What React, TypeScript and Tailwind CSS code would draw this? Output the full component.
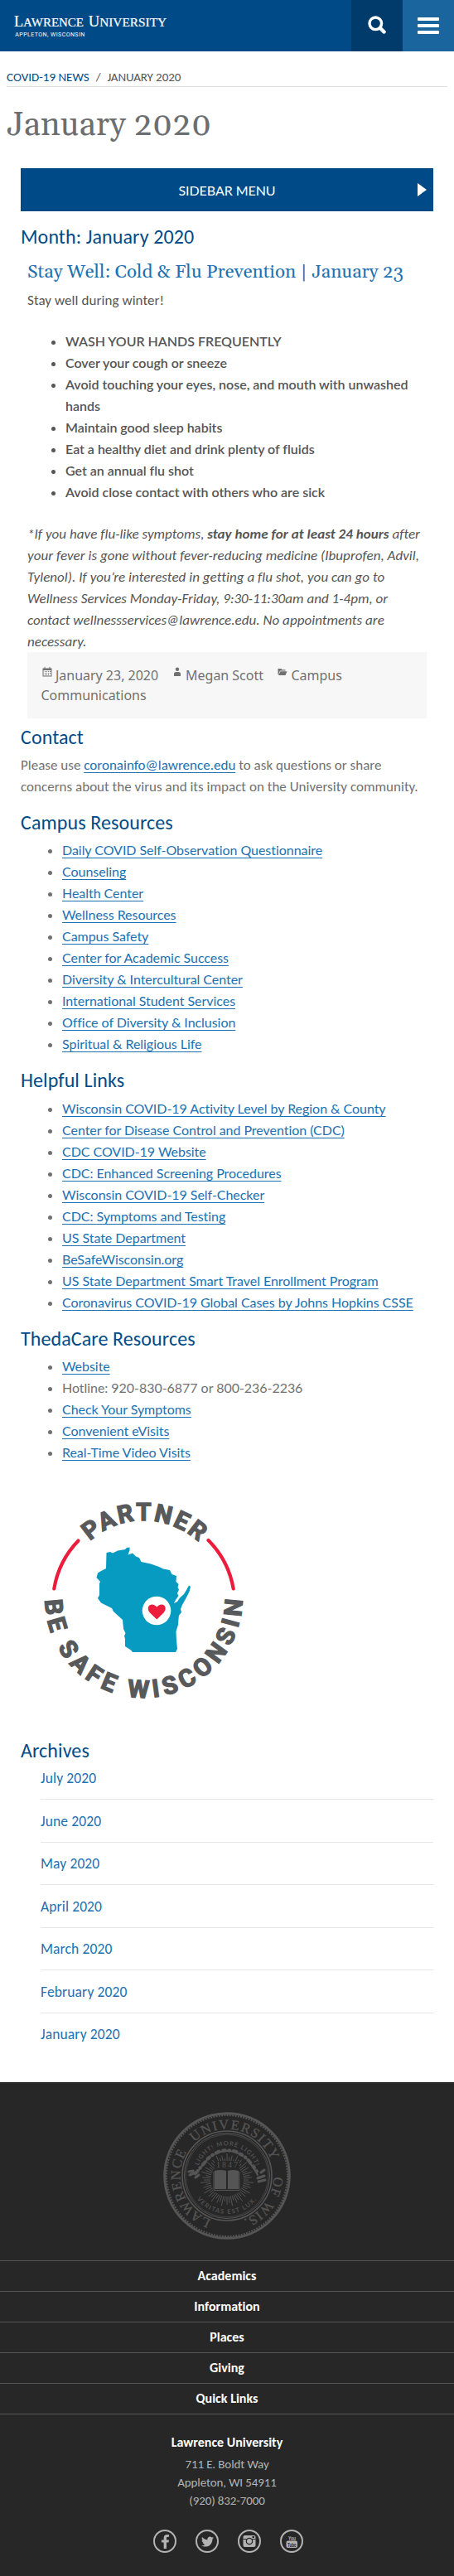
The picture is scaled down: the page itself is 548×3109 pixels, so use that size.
import React from "react";
import { FaFacebookF, FaTwitter } from "react-icons/fa";

const campus = [
  "Daily COVID Self-Observation Questionnaire",
  "Counseling",
  "Health Center",
  "Wellness Resources",
  "Campus Safety",
  "Center for Academic Success",
  "Diversity & Intercultural Center",
  "International Student Services",
  "Office of Diversity & Inclusion",
  "Spiritual & Religious Life",
];
const helpful = [
  "Wisconsin COVID-19 Activity Level by Region & County",
  "Center for Disease Control and Prevention (CDC)",
  "CDC COVID-19 Website",
  "CDC: Enhanced Screening Procedures",
  "Wisconsin COVID-19 Self-Checker",
  "CDC: Symptoms and Testing",
  "US State Department",
  "BeSafeWisconsin.org",
  "US State Department Smart Travel Enrollment Program",
  "Coronavirus COVID-19 Global Cases by Johns Hopkins CSSE",
];
const theda = [
  "Website",
  "Hotline: 920-830-6877 or 800-236-2236",
  "Check Your Symptoms",
  "Convenient eVisits",
  "Real-Time Video Visits",
];
const tips = [
  "WASH YOUR HANDS FREQUENTLY",
  "Cover your cough or sneeze",
  "Avoid touching your eyes, nose, and mouth with unwashed hands",
  "Maintain good sleep habits",
  "Eat a healthy diet and drink plenty of fluids",
  "Get an annual flu shot",
  "Avoid close contact with others who are sick",
];
const months = ["July", "June", "May", "April", "March", "February", "January"];
const sections = ["Academics", "Information", "Places", "Giving", "Quick Links"];

function Logo() {
  return (
    <svg width="210" height="62" viewBox="0 0 210 62" fill="#fff" className="block tracking-normal">
      <g fontFamily="'Liberation Serif', serif">
        <text x="17" y="32.4" fontSize="18" textLength="84" lengthAdjust="spacingAndGlyphs" stroke="#fff" strokeWidth=".2">
          L<tspan fontSize="14.800">AWRENCE</tspan>
        </text>
        <text x="106.700" y="32.4" fontSize="18" textLength="94.500" lengthAdjust="spacingAndGlyphs" stroke="#fff" strokeWidth=".2">
          U<tspan fontSize="14.800">NIVERSITY</tspan>
        </text>
      </g>
      <text x="18.300" y="44" fontSize="7" fontFamily="Roboto, sans-serif" textLength="84">
        APPLETON, WISCONSIN
      </text>
    </svg>
  );
}

function Heading({ children, className = "" }: { children: React.ReactNode; className?: string }) {
  return <h2 className={`text-[24px] leading-[29px] tracking-[0.1px] text-[#004b87] ${className}`}>{children}</h2>;
}

function Link({ children }: { children: React.ReactNode }) {
  return (
    <a className="text-[#2071b2] underline decoration-1 underline-offset-[3px] [text-decoration-skip-ink:none]">
      {children}
    </a>
  );
}

function Links({ items, className = "" }: { items: string[]; className?: string }) {
  return (
    <ul className={`list-disc pl-[50px] font-['Lato',sans-serif] text-[16px] tracking-[-0.04px] ${className}`}>
      {items.map((t) => (
        <li key={t} className="leading-[26px]">
          {t.startsWith("Hotline") ? t : <Link>{t}</Link>}
        </li>
      ))}
    </ul>
  );
}

function Partner() {
  return (
    <svg width="280" height="290" viewBox="0 0 280 290" className="block tracking-normal">
      <defs>
        <path id="ptop" d="M46.400 142 A97 97 0 0 1 240.400 142" />
        <path id="pbot" d="M24.400 140 A119 119 0 1 0 262.400 140" />
      </defs>
      <g fill="#58595b" stroke="#58595b" strokeWidth="1.400" fontFamily="Roboto, sans-serif" fontWeight="700" fontSize="29.500">
        <text>
          <textPath href="#ptop" startOffset="81" textLength="144">PARTNER</textPath>
        </text>
        <text>
          <textPath href="#pbot" startOffset="1" textLength="372">BE SAFE WISCONSIN</textPath>
        </text>
      </g>
      <g fill="none" stroke="#ed1c3c" strokeWidth="4.2" strokeLinecap="round">
        <path d="M64.5 69.5 A109 109 0 0 0 35.3 127.5" />
        <path d="M221.5 69 A109 109 0 0 1 251.7 127.5" />
      </g>
      <path
        fill="#079bc2"
        d="M98.5 84 L103 83 L106 84.500 L112 81.500 L121 80 L123 78 L126.500 77.500 L126.500 81 L124.500 86.500 L130 84.500 L134 88.500 L138 90 L140.500 95 L152 97.500 L162 101 L167 103.500 L175 105 L177.500 110 L183 112 L182.500 119 L185.500 122 L184.500 126 L186 128.500 L184 133 L185.500 136 L182 141 L180 145 L184 143 L187 138.500 L192 134 L195 129 L198 123.500 L200 125 L198.500 131 L195 138 L190 147 L188 152 L189 156 L186 159.500 L185.500 164 L185 171 L182.500 179 L183 190 L184 200 L182 204 L130 204 L128 201.500 L121 197 L121 188 L120 184.500 L121.500 181 L119 176 L118 165 L107 155 L105 151 L98 147.500 L92 144.500 L88 139 L90 135 L90 121 L91 119 L86.500 114 L88 108.500 L92 106 L98 103 Z"
      />
      <circle cx="159" cy="154" r="17.300" fill="#fff" />
      <path
        fill="#ed1c3c"
        d="M159.300 164.500 L151 156.500 C144.500 148.500 153.500 142.500 159.300 149.500 C165 142.500 174 148.500 167.500 156.500 Z"
      />
    </svg>
  );
}

function Seal() {
  const rays = Array.from({ length: 60 }, (_, i) => i);
  return (
    <svg width="154" height="154" viewBox="0 0 154 154" className="block shrink-0 tracking-normal">
      <defs>
        <path id="sring" d="M57.700 130.100 A56.500 56.500 0 1 1 96.300 130.100" />
        <path id="smotto" d="M40.500 77 A36.500 36.500 0 0 1 113.500 77" />
        <path id="slux" d="M31 77 A46 46 0 0 0 123 77" />
      </defs>
      <g fill="none" stroke="#555">
        <circle cx="77" cy="77" r="75.300" strokeWidth="3" />
        <circle cx="77" cy="77" r="73" strokeWidth="2" strokeDasharray="1.800 1.500" />
        <circle cx="77" cy="77" r="54" strokeWidth="1.600" />
        <circle cx="77" cy="77" r="51.500" strokeWidth="1" />
        <circle cx="77" cy="77" r="49.800" strokeWidth=".6" />
        {rays.map((i) => {
          const a = (i * 6 * Math.PI) / 180;
          const r = [32, 28, 30, 26][i % 4];
          return (
            <path
              key={i}
              d={`M${77 + 20 * Math.sin(a)} ${82 - 20 * Math.cos(a)} L${77 + r * Math.sin(a)} ${82 - r * Math.cos(a)}`}
            />
          );
        })}
        <path
          d="M40 73 Q44 68 50.500 60.500 Q55 54 62 50.500 Q69 46 77 46.300 Q86 46 92.500 50.500 Q100 54 105 61 Q111 68 115 75"
          strokeWidth="4.200"
          strokeLinecap="round"
          strokeDasharray="2.500 4.600 .5 4.800 4 5"
        />
        <path
          d="M38 76 Q43 70 49.700 61.600 Q55 55 61.300 51.600 Q69 47 77 47 Q86 47 93 51.600 Q101 55 105 62 Q111 70 116 80"
          strokeWidth="2"
          strokeDasharray="5 1"
        />
        <path d="M31 72 L36 71 M32 76 L39 73 M39 79 L43 76 M114 80 L122 77 M115 84 L123 82 M118 73 L122 70" strokeWidth="3" strokeLinecap="round" />
      </g>
      <g fill="#555">
        <rect x="60" y="70" width="33" height="26" fill="#272727" />
        <path d="M62 71 Q69 69 76 71 V93 H62 Z M78 71 Q85 69 91 71 V93 H78 Z" />
        <path d="M61 72 V94.500 H92 V72" fill="none" stroke="#555" />
        <rect x="62" y="59" width="30" height="10" fill="#272727" />
        <text x="64" y="67.300" fontFamily="'Liberation Serif', serif" fontSize="10" textLength="26">1847</text>
        <g fontFamily="'Liberation Serif', serif" fontSize="16.500" stroke="#555" strokeWidth=".3">
          <text><textPath href="#sring" startOffset="0" textLength="99">LAWRENCE</textPath></text>
          <text><textPath href="#sring" startOffset="114" textLength="113">UNIVERSITY</textPath></text>
          <text><textPath href="#sring" startOffset="247" textLength="22">OF</textPath></text>
          <text><textPath href="#sring" startOffset="277" textLength="37">WIS.</textPath></text>
        </g>
        <g fontFamily="Lato, sans-serif" fontSize="7.500" fontWeight="600">
          <text><textPath href="#smotto" startOffset="12.500" textLength="90">LIGHT! MORE LIGHT!</textPath></text>
          <text><textPath href="#slux" startOffset="30" textLength="83">VERITAS EST LUX.</textPath></text>
        </g>
      </g>
    </svg>
  );
}

function MetaIcon({ children }: { children: React.ReactNode }) {
  return (
    <svg width="16" height="16" viewBox="0 0 16 16" className="mr-[1.5px] inline-block align-baseline" fill="#717171">
      {children}
    </svg>
  );
}

function Social({ children }: { children: React.ReactNode }) {
  return (
    <span className="flex size-[28px] items-center justify-center rounded-full border-2 border-[#b3b3b3] text-[#b3b3b3]">
      {children}
    </span>
  );
}

export default function App() {
  return (
    <div className="w-full bg-white font-['Carlito','Lato',sans-serif] text-[17px] tracking-[0.01px] text-[#717171]">
      <header className="flex h-[62px] bg-[#004b87]">
        <Logo />
        <div className="ml-auto flex">
          <div className="flex size-[62px] items-center justify-center bg-[#003b6b]">
            <svg width="22" height="22" viewBox="0 0 22 22" fill="none" stroke="#fff" className="mb-[2px]">
              <circle cx="9.300" cy="9.300" r="7.300" strokeWidth="3.400" />
              <path d="M15 15 L19.500 19.500" strokeWidth="4.500" strokeLinecap="round" />
            </svg>
          </div>
          <div className="flex w-[62px] flex-col items-center justify-center gap-1 bg-[#1b659f]">
            <span className="h-1 w-[26px] rounded-[1px] bg-white" />
            <span className="h-1 w-[26px] rounded-[1px] bg-white" />
            <span className="h-1 w-[26px] rounded-[1px] bg-white" />
          </div>
        </div>
      </header>

      <nav className="mx-2 mt-[20px] flex h-[23px] items-center gap-2 border-b border-[#ddd] text-[15px] leading-[20px] text-[#555]">
        <a className="text-[#004b87]">COVID-19 NEWS</a>
        <span>/</span>
        <span className="tracking-[-0.1px]">JANUARY 2020</span>
      </nav>
      <h1 className="mx-2 mt-[19px] font-[Gelasio,Georgia,serif] text-[40px] leading-[56px] text-[#6d6e70]">
        January 2020
      </h1>

      <main className="px-[25px]">
        <div className="mt-[23px] flex h-[52px] items-center bg-[#004b87] pl-[19px] font-['Lato',sans-serif] text-[16px] leading-[26px] text-white">
          <span className="ml-auto pt-[2px] tracking-[-0.05px]">SIDEBAR MENU</span>
          <svg width="11" height="16" viewBox="0 0 11 16" className="mr-2 ml-auto" fill="#fff">
            <path d="M0 0 L11 8 L0 16 Z" />
          </svg>
        </div>

        <Heading className="mt-[16px]">Month: January 2020</Heading>
        <article className="px-2 text-[#555]">
          <h3 className="mt-[13px] font-[Gelasio,Georgia,serif] text-[22.4px] leading-[32px] tracking-[-0.02px] whitespace-nowrap text-[#2071b2]">
            Stay Well: Cold &amp; Flu Prevention | January 23
          </h3>
          <p className="mt-[5px] leading-[26px] tracking-[0.07px]">Stay well during winter!</p>
          <ul className="mt-[23px] list-disc pl-[46px] font-['Lato',sans-serif] text-[16px] font-semibold tracking-[-0.01px]">
            {tips.map((t) => (
              <li key={t} className="leading-[26px]">{t}</li>
            ))}
          </ul>
          <p className="mt-[25px] leading-[26px] tracking-[0.04px] italic">
            *If you have flu-like symptoms, <b className="font-bold">stay home for at least 24 hours</b> after your fever is gone
            without fever-reducing medicine (Ibuprofen, Advil, Tylenol). If you’re interested in getting a flu shot, you can go to
            Wellness Services Monday-Friday, 9:30-11:30am and 1-4pm, or contact wellnessservices@lawrence.edu. No appointments
            are necessary.
          </p>
          <footer className="-mt-px h-[80px] bg-[#f7f7f7] pt-4 pr-4 pl-[16.5px] font-['Noto_Sans',sans-serif] text-[16px] leading-[24px] tracking-[-0.02px] text-[#717171]">
            <span className="mr-[15.5px]">
              <MetaIcon>
                <path d="M1.500 1.500h2V0h1v1.500h5V0h1v1.500h2V11.500h-11zM2.500 4v6.500h9V4z" fillRule="evenodd" />
                <path d="M4 5h1v1H4zm2 0h1v1H6zm2 0h1v1H8zm2 0h1v1h-1zM4 7h1v1H4zm2 0h1v1H6zm2 0h1v1H8zm2 0h1v1h-1zM4 9h1v1H4zm2 0h1v1H6zm2 0h1v1H8z" />
              </MetaIcon>
              January 23, 2020
            </span>
            <span className="mr-[16px]">
              <MetaIcon>
                <circle cx="7" cy="2.700" r="2.200" />
                <path d="M3 11V8q0-2 3-2h2q3 0 3 2v3z" />
              </MetaIcon>
              Megan Scott
            </span>
            <MetaIcon>
              <path d="M1.500 2h4l1 1.300h4V4.500H4L2.200 9H1.500zM4.500 5.200h8L10.500 10H2z" />
            </MetaIcon>
            Campus Communications
          </footer>
        </article>

        <Heading className="mt-[8px]">Contact</Heading>
        <p className="mt-[7px] leading-[26px]">
          Please use <Link>coronainfo@lawrence.edu</Link> to ask questions or share concerns about the virus and its impact on the
          University community.
        </p>
        <Heading className="mt-[15px]">Campus Resources</Heading>
        <Links items={campus} className="mt-[6px]" />
        <Heading className="mt-[16px]">Helpful Links</Heading>
        <Links items={helpful} className="mt-[7px]" />
        <Heading className="mt-[16px]">ThedaCare Resources</Heading>
        <Links items={theda} className="mt-[6px]" />
        <div className="mt-[24px] ml-[5px]">
          <Partner />
        </div>
        <Heading className="mt-[18px]">Archives</Heading>
        <ul className="mt-[6px] pl-6 text-[17.5px] tracking-[0.12px] text-[#2071b2]">
          {months.map((m) => (
            <li key={m} className="mb-[12.5px] border-b border-[#e6e6e6] pb-[12px] leading-[26px] last:mb-0 last:border-0 last:pb-0">
              {m} 2020
            </li>
          ))}
        </ul>
      </main>

      <footer className="mt-[45px] flex h-[596px] flex-col items-center bg-[#272727] pt-[36px] text-[16px] text-white">
        <Seal />
        <ul className="mt-[25px] w-full border-t border-[#555] text-center font-bold">
          {sections.map((t) => (
            <li key={t} className="h-[37px] border-b border-[#555] leading-[36px]">{t}</li>
          ))}
        </ul>
        <p className="mt-[23px] leading-[22px] font-bold">Lawrence University</p>
        <address className="mt-[4px] text-center text-[15px] leading-[22px] tracking-[-0.12px] text-[#b3b3b3] not-italic">
          711 E. Boldt Way
          <br />
          Appleton, WI 54911
          <br />
          (920) 832-7000
        </address>
        <div className="mt-[24px] ml-[3px] flex gap-[23px]">
          <Social>
            <FaFacebookF size={17} />
          </Social>
          <Social>
            <FaTwitter size={15} />
          </Social>
          <Social>
            <svg width="16" height="16" viewBox="0 0 16 16" fill="#b3b3b3">
              <rect x=".5" y="1" width="15" height="14" rx="2" />
              <rect x=".5" y="5" width="15" height="1" fill="#272727" />
              <circle cx="8" cy="8" r="4.300" fill="#272727" />
              <circle cx="8" cy="8" r="3" />
              <rect x="11.500" y="2" width="2.500" height="2" fill="#272727" />
            </svg>
          </Social>
          <Social>
            <svg
              width="16"
              height="18"
              viewBox="0 0 16 18"
              fill="#b3b3b3"
              fontFamily="'Liberation Sans', sans-serif"
              fontWeight="700"
              className="overflow-visible"
            >
              <text x="4" y="7.500" fontSize="8" textLength="9" lengthAdjust="spacingAndGlyphs">You</text>
              <rect x="1.500" y="8.500" width="13.500" height="8.500" rx="2" />
              <text x="3" y="15.700" fontSize="8" textLength="10.500" lengthAdjust="spacingAndGlyphs" fill="#272727">Tube</text>
            </svg>
          </Social>
        </div>
      </footer>
    </div>
  );
}
